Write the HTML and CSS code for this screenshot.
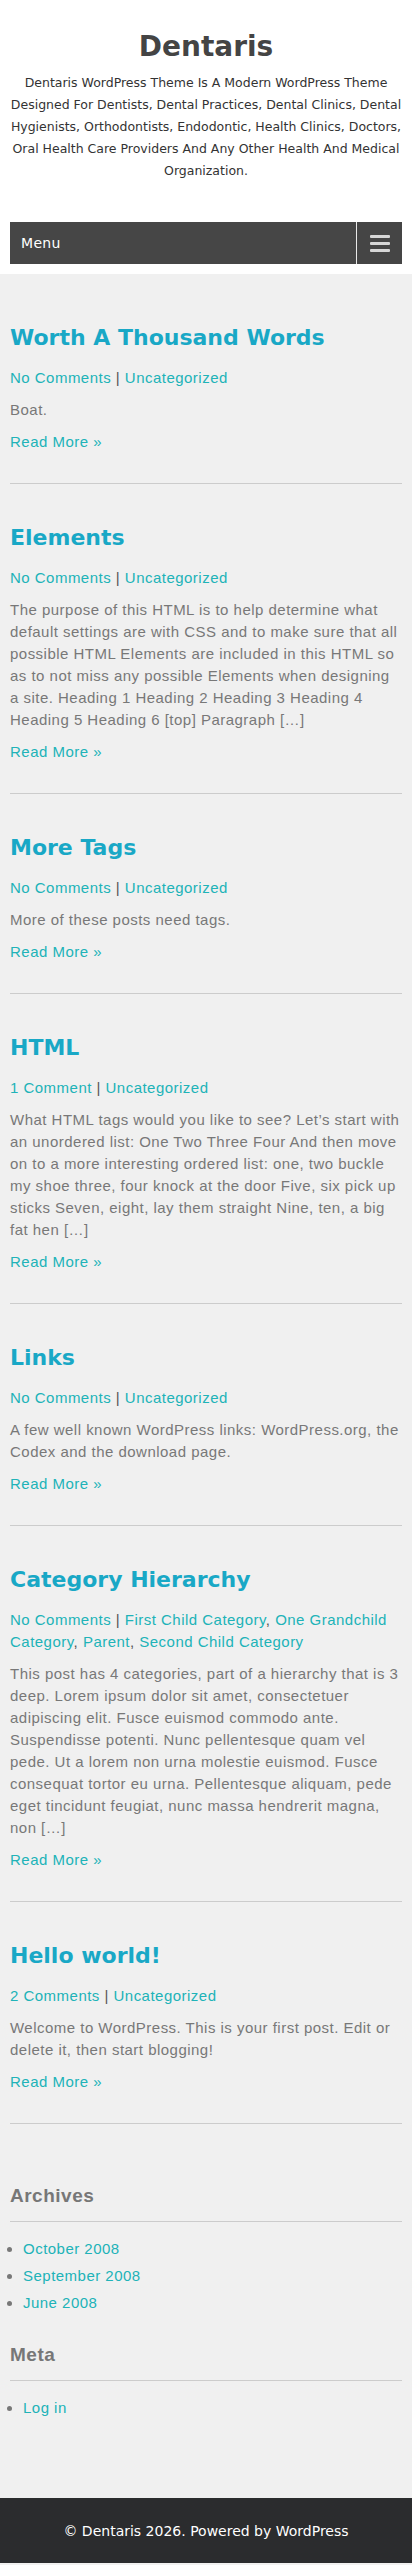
FILE: index.html
```html
<!DOCTYPE html>
<html lang="en">
<head>
<meta charset="utf-8">
<meta name="viewport" content="width=device-width, initial-scale=1">
<title>Dentaris</title>
<link rel="stylesheet" href="styles.css">
</head>
<body>
<header class="site-header">
  <div class="branding">
    <h1 class="site-title"><a href="#">Dentaris</a></h1>
    <p class="site-description">Dentaris WordPress Theme Is A Modern WordPress Theme Designed For Dentists, Dental Practices, Dental Clinics, Dental Hygienists, Orthodontists, Endodontic, Health Clinics, Doctors, Oral Health Care Providers And Any Other Health And Medical Organization.</p>
  </div>
  <nav class="main-nav">
    <span class="menu-label">Menu</span>
    <button class="menu-toggle" type="button" aria-label="Toggle menu">
      <span class="bar"></span><span class="bar"></span><span class="bar"></span>
    </button>
  </nav>
</header>

<main class="site-main">
  <article class="post">
    <h2 class="post-title"><a href="#">Worth A Thousand Words</a></h2>
    <p class="post-meta"><a href="#">No Comments</a> | <a href="#">Uncategorized</a></p>
    <p class="post-excerpt">Boat.</p>
    <p class="read-more"><a href="#">Read More »</a></p>
  </article>

  <article class="post">
    <h2 class="post-title"><a href="#">Elements</a></h2>
    <p class="post-meta"><a href="#">No Comments</a> | <a href="#">Uncategorized</a></p>
    <p class="post-excerpt">The purpose of this HTML is to help determine what default settings are with CSS and to make sure that all possible HTML Elements are included in this HTML so as to not miss any possible Elements when designing a site. Heading 1 Heading 2 Heading 3 Heading 4 Heading 5 Heading 6 [top] Paragraph […]</p>
    <p class="read-more"><a href="#">Read More »</a></p>
  </article>

  <article class="post">
    <h2 class="post-title"><a href="#">More Tags</a></h2>
    <p class="post-meta"><a href="#">No Comments</a> | <a href="#">Uncategorized</a></p>
    <p class="post-excerpt">More of these posts need tags.</p>
    <p class="read-more"><a href="#">Read More »</a></p>
  </article>

  <article class="post">
    <h2 class="post-title"><a href="#">HTML</a></h2>
    <p class="post-meta"><a href="#">1 Comment</a> | <a href="#">Uncategorized</a></p>
    <p class="post-excerpt">What HTML tags would you like to see? Let’s start with an unordered list: One Two Three Four And then move on to a more interesting ordered list: one, two buckle my shoe three, four knock at the door Five, six pick up sticks Seven, eight, lay them straight Nine, ten, a big fat hen […]</p>
    <p class="read-more"><a href="#">Read More »</a></p>
  </article>

  <article class="post">
    <h2 class="post-title"><a href="#">Links</a></h2>
    <p class="post-meta"><a href="#">No Comments</a> | <a href="#">Uncategorized</a></p>
    <p class="post-excerpt">A few well known WordPress links: WordPress.org, the Codex and the download page.</p>
    <p class="read-more"><a href="#">Read More »</a></p>
  </article>

  <article class="post">
    <h2 class="post-title"><a href="#">Category Hierarchy</a></h2>
    <p class="post-meta"><a href="#">No Comments</a> | <a href="#">First Child Category</a>, <a href="#">One Grandchild Category</a>, <a href="#">Parent</a>, <a href="#">Second Child Category</a></p>
    <p class="post-excerpt">This post has 4 categories, part of a hierarchy that is 3 deep. Lorem ipsum dolor sit amet, consectetuer adipiscing elit. Fusce euismod commodo ante. Suspendisse potenti. Nunc pellentesque quam vel pede. Ut a lorem non urna molestie euismod. Fusce consequat tortor eu urna. Pellentesque aliquam, pede eget tincidunt feugiat, nunc massa hendrerit magna, non […]</p>
    <p class="read-more"><a href="#">Read More »</a></p>
  </article>

  <article class="post">
    <h2 class="post-title"><a href="#">Hello world!</a></h2>
    <p class="post-meta"><a href="#">2 Comments</a> | <a href="#">Uncategorized</a></p>
    <p class="post-excerpt">Welcome to WordPress. This is your first post. Edit or delete it, then start blogging!</p>
    <p class="read-more"><a href="#">Read More »</a></p>
  </article>

  <aside class="sidebar">
    <section class="widget">
      <h3 class="widget-title">Archives</h3>
      <ul class="widget-list">
        <li><a href="#">October 2008</a></li>
        <li><a href="#">September 2008</a></li>
        <li><a href="#">June 2008</a></li>
      </ul>
    </section>
    <section class="widget">
      <h3 class="widget-title">Meta</h3>
      <ul class="widget-list">
        <li><a href="#">Log in</a></li>
      </ul>
    </section>
  </aside>
</main>

<footer class="site-footer">
  <p class="copyright">© Dentaris 2026. Powered by WordPress</p>
</footer>
</body>
</html>
```

FILE: styles.css
```css
* { box-sizing: border-box; }

html, body {
  margin: 0;
  padding: 0;
}

body {
  background: #f0f0f0;
  color: #787878;
  font-family: "Liberation Sans", Arial, sans-serif;
  font-size: 15px;
  line-height: 22px;
  letter-spacing: 0.48px;
}

a {
  color: #20b3b8;
  text-decoration: none;
}

/* Header */
.site-header {
  background: #ffffff;
  padding: 27px 0 10px;
}

.branding {
  text-align: center;
  padding: 0 10px;
}

.site-title {
  margin: 0;
  font-family: "DejaVu Sans", sans-serif;
  font-weight: 700;
  font-size: 28px;
  line-height: 40px;
  letter-spacing: 0;
}

.site-title a {
  color: #444444;
}

.site-description {
  margin: 5px 0 0;
  font-family: "DejaVu Sans", sans-serif;
  font-size: 12.5px;
  line-height: 22px;
  letter-spacing: 0;
  color: #333333;
}

.main-nav {
  margin: 40px 10px 0;
  height: 42px;
  background: #464646;
  display: flex;
  align-items: stretch;
  justify-content: space-between;
}

.menu-label {
  display: flex;
  align-items: center;
  padding-left: 11px;
  font-family: "DejaVu Sans", sans-serif;
  font-size: 14px;
  letter-spacing: 0.3px;
  color: #ffffff;
}

.menu-toggle {
  width: 46px;
  border: 0;
  border-left: 1px solid #e8e8e8;
  background: #454545;
  padding: 0;
  display: flex;
  flex-direction: column;
  align-items: center;
  justify-content: center;
  gap: 4px;
}

.menu-toggle .bar {
  display: block;
  width: 20px;
  height: 3px;
  border-radius: 1px;
  background: #d6d6d6;
}

/* Posts */
.site-main {
  padding: 10px 10px 0;
}

.post {
  padding: 39px 0 30px;
  border-bottom: 1px solid #cccccc;
}

.post-title {
  margin: 0;
  font-family: "DejaVu Sans", sans-serif;
  font-weight: 700;
  font-size: 22px;
  line-height: 30px;
  letter-spacing: 0;
}

.post-title a {
  color: #19a8c6;
}

.post-meta {
  margin: 14px 0 0;
  color: #555555;
}

.post-excerpt {
  margin: 10px 0 0;
}

.read-more {
  margin: 10px 0 0;
}

/* Sidebar */
.sidebar {
  padding: 59px 0 77px;
}

.widget + .widget {
  margin-top: 26px;
}

.widget-title {
  margin: 0;
  padding-bottom: 12px;
  border-bottom: 1px solid #cccccc;
  font-family: "Liberation Sans", Arial, sans-serif;
  font-weight: 700;
  font-size: 19px;
  line-height: 26px;
  letter-spacing: 0.5px;
  color: #777777;
}

.widget-list {
  margin: 13px 0 0;
  padding-left: 13px;
}

.widget-list li {
  line-height: 27px;
}

/* Footer */
.site-footer {
  background: #2b2c2e;
  height: 65px;
  display: flex;
  align-items: center;
  justify-content: center;
}

.copyright {
  margin: 0;
  font-family: "DejaVu Sans", sans-serif;
  font-size: 14px;
  letter-spacing: 0;
  color: #ffffff;
}
```
